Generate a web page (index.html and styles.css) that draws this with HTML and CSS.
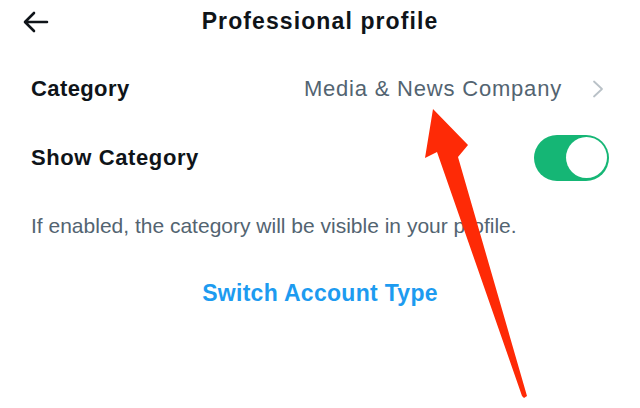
FILE: index.html
```html
<!DOCTYPE html>
<html>
<head>
<link rel="stylesheet" href="styles.css">
</head>
<body>

<div class="screen">
    <div class="header">
        <svg class="back" width="26" height="22" viewBox="0 0 26 22">
            <path d="M24 11H3M11 2L2 11l9 9" fill="none" stroke="#0f1419" stroke-width="2.6" stroke-linecap="round" stroke-linejoin="round"/>
        </svg>
        <div class="title">Professional profile</div>
    </div>

    <div class="list">
        <div class="row">
            <div class="label">Category</div>
            <div class="value">
                <span>Media &amp; News Company</span>
                <svg class="chevron" width="12" height="18" viewBox="0 0 12 18">
                    <path d="M2 1.5l8 7.5-8 7.5" fill="none" stroke="#b9c1c7" stroke-width="1.8" stroke-linecap="round" stroke-linejoin="round"/>
                </svg>
            </div>
        </div>
        <div class="row">
            <div class="label wide">Show Category</div>
            <div class="toggle"><div class="knob"></div></div>
        </div>
    </div>

    <p class="hint">If enabled, the category will be visible in your profile.</p>

    <div class="switch-link">Switch Account Type</div>

    <!-- red annotation arrow drawn over the screenshot -->
    <svg class="annotation" width="640" height="408" viewBox="0 0 640 408">
        <polygon points="433,109 468,145 458,157 527,396 524,398 522,396 437,152 425,158" fill="#fe2a06"/>
    </svg>
</div>

</body>
</html>
```

FILE: styles.css
```css
body {
    margin: 0;
    background-color: white;
    font-family: "Liberation Sans", Arial, sans-serif;
    color: #0f1419;
}

.screen {
    position: relative;
    width: 640px;
    height: 408px;
    overflow: hidden;
}

.header {
    height: 42px;
    display: flex;
    align-items: center;
    justify-content: center;
    position: relative;
}

.back {
    position: absolute;
    left: 23px;
    top: 11px;
}

.title {
    font-size: 23px;
    line-height: 26px;
    font-weight: bold;
    letter-spacing: 1.1px;
}

.list {
    margin-top: 12px;
}

.row {
    height: 69px;
    padding: 0 30px 0 31px;
    display: flex;
    align-items: center;
    justify-content: space-between;
}

.label {
    font-size: 22px;
    line-height: 26px;
    font-weight: bold;
    letter-spacing: 0.4px;
}

.label.wide {
    letter-spacing: 0.6px;
}

.value {
    display: flex;
    align-items: center;
    gap: 30px;
    font-size: 22px;
    line-height: 26px;
    color: #536471;
    letter-spacing: 0.8px;
    margin-right: 6px;
}

.chevron {
    margin-top: 1px;
}

.toggle {
    width: 75px;
    height: 46px;
    border-radius: 23px;
    background-color: #15b675;
    display: flex;
    align-items: center;
    justify-content: flex-end;
    padding: 0 2px;
    box-sizing: border-box;
    margin-right: 1px;
}

.knob {
    width: 41px;
    height: 41px;
    border-radius: 50%;
    background-color: white;
}

.hint {
    margin: 21px 0 0 31px;
    font-size: 21px;
    line-height: 26px;
    color: #536471;
}

.switch-link {
    margin-top: 40px;
    text-align: center;
    font-size: 23px;
    line-height: 28px;
    font-weight: bold;
    letter-spacing: 0.3px;
    color: #1d9bf0;
}

.annotation {
    position: absolute;
    left: 0;
    top: 0;
    pointer-events: none;
}
```
